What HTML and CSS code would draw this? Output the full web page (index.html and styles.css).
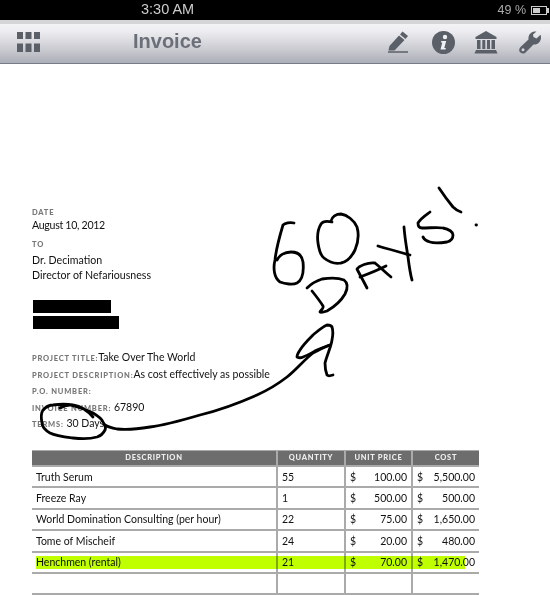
FILE: index.html
```html
<!DOCTYPE html>
<html lang="en">
<head>
  <meta charset="UTF-8">
  <title>Invoice</title>
  <link rel="stylesheet" href="styles.css">
</head>
<body>
  <div class="statusbar">
    <span class="clock">3:30 AM</span>
    <div class="battery-area">
      <span class="percent">49 %</span>
      <div class="battery"><div class="battery-fill"></div></div>
    </div>
  </div>

  <div class="navbar">
    <svg class="icon-grid" width="23" height="20" viewBox="0 0 23 20">
      <path d="M0 0h6v7H0zM8.500 0h6v7h-6zM17 0h6v7h-6zM0 11.500h6V20H0zM8.500 11.500h6V20h-6zM17 11.500h6V20h-6z" fill="#5a5f68"/>
    </svg>
    <h1 class="title">Invoice</h1>
    <div class="nav-icons">
      <svg class="icon-pencil" width="21" height="22" viewBox="0 0 21 22">
        <path d="M14.500 .5l5.500 4.500-2.500 3-5.500-4.500z" fill="#5a5f68"/>
        <path d="M11 4.500l5.500 4.500-10 10.500L.5 19.500 1.500 15z" fill="#5a5f68"/>
        <path d="M0 21h20" stroke="#5a5f68" stroke-width="1.500"/>
      </svg>
      <svg class="icon-info" width="23" height="23" viewBox="0 0 23 23">
        <circle cx="11.500" cy="11.500" r="11.500" fill="#5a5f68"/>
        <circle cx="13" cy="6" r="2.200" fill="#f0f1f4"/>
        <path d="M9.200 10h5l-1.900 7h1.500l-.3 1.500H8.500l1.800-7H9z" fill="#f0f1f4"/>
      </svg>
      <svg class="icon-bank" width="24" height="23" viewBox="0 0 24 23">
        <path d="M12 0L22.500 6V8h-21V6z" fill="#5a5f68"/>
        <path d="M3 9h3.500v9H3zM8.300 9h3v9h-3zM13 9h3v9h-3zM17.500 9H21v9h-3.500z" fill="#5a5f68"/>
        <path d="M2 19h20l1.500 3.500H.5z" fill="#5a5f68"/>
      </svg>
      <svg class="icon-wrench" width="22" height="23" viewBox="0 0 22 23">
        <path d="M15.500.5C11.500 1 9 4.500 9.500 8.500L1.500 16C-.5 18 0 20.500 1.500 21.500 3 23 5.500 23 7 21L14.500 13.500C18.500 14 22 11 22 6.500 22 5.500 21.800 4.500 21.500 3.800L17.500 7.500 14.500 6 14 3.500 17.500.5z" fill="#5a5f68"/>
        <circle cx="4" cy="18.800" r="1.500" fill="#d5d6dc"/>
      </svg>
    </div>
  </div>

  <div class="page">
    <div class="meta">
      <div class="caption">DATE</div>
      <div class="line line-date">August 10, 2012</div>
      <div class="caption caption-to">TO</div>
      <div class="line">Dr. Decimation</div>
      <div class="line line-second">Director of Nefariousness</div>
      <div class="redact redact-short"></div>
      <div class="redact redact-long"></div>
    </div>

    <div class="project">
      <div class="prow"><span class="caption">PROJECT TITLE:</span>Take Over The World</div>
      <div class="prow"><span class="caption">PROJECT DESCRIPTION:</span>As cost effectively as possible</div>
      <div class="prow"><span class="caption">P.O. NUMBER:</span></div>
      <div class="prow"><span class="caption">INVOICE NUMBER:</span> 67890</div>
      <div class="prow"><span class="caption">TERMS:</span> 30 Days</div>
    </div>

    <table class="items">
      <thead>
        <tr><th>DESCRIPTION</th><th>QUANTITY</th><th>UNIT PRICE</th><th>COST</th></tr>
      </thead>
      <tbody>
        <tr><td>Truth Serum</td><td>55</td><td><div class="money"><span>$</span><span>100.00</span></div></td><td><div class="money"><span>$</span><span>5,500.00</span></div></td></tr>
        <tr><td>Freeze Ray</td><td>1</td><td><div class="money"><span>$</span><span>500.00</span></div></td><td><div class="money"><span>$</span><span>500.00</span></div></td></tr>
        <tr><td>World Domination Consulting (per hour)</td><td>22</td><td><div class="money"><span>$</span><span>75.00</span></div></td><td><div class="money"><span>$</span><span>1,650.00</span></div></td></tr>
        <tr><td>Tome of Mischeif</td><td>24</td><td><div class="money"><span>$</span><span>20.00</span></div></td><td><div class="money"><span>$</span><span>480.00</span></div></td></tr>
        <tr><td>Henchmen (rental)</td><td>21</td><td><div class="money"><span>$</span><span>70.00</span></div></td><td><div class="money"><span>$</span><span>1,470.00</span></div></td></tr>
        <tr class="empty"><td></td><td></td><td></td><td></td></tr>
      </tbody>
    </table>

    <div class="highlight"></div>

    <!-- pen scribbles on top of the invoice -->
    <svg class="ink" width="550" height="595" viewBox="0 0 550 595">
      <g fill="none" stroke="#000" stroke-width="2.800" stroke-linecap="round" stroke-linejoin="round">
        <path d="M294 223C290 222 285 223 283 225 280 235 276 250 275 260 273 268 274 278 280 282 285 284 293 285 297 283 302 280 304 272 303 262 302 255 297 252 291 252 284 252 279 256 277 260"/>
        <path d="M332 222C328 221 323 221 321 224 318 229 317 236 318 243 319 250 320 255 324 258 329 262 336 264 341 263 347 262 352 256 355 250 358 243 359 234 357 227 354 220 347 215 341 214 336 214 332 217 331 221"/>
        <path d="M307 288C311 284 316 281 322 279 329 278 339 278 344 280 348 283 348 288 345 294 341 301 334 307 327 311 324 312 321 313 320 312 321 310 324 308 323 306 320 301 316 296 312 291"/>
        <path d="M367 288C364 282 360 275 357 269 359 266 368 262 375 263 380 267 386 273 391 277"/>
        <path d="M360 277C368 274 378 270 386 266"/>
        <path d="M378 246C388 249 399 252 410 255"/>
        <path d="M404 227C405 240 407 250 408 257 409 265 410 273 412 280"/>
        <path d="M430 212C426 215 421 218 418 223 418 226 419 228 422 228 430 228 438 227 443 228 449 229 453 232 453 235 453 239 451 241 447 242 440 243 433 243 430 242 426 241 424 239 423 237"/>
        <path d="M439 188C443 194 448 201 453 207 455 209 458 211 461 212"/>
        <path d="M476 225h.5"/>
        <path d="M333 375C330 376 328 376 327 375 325 370 325 367 325 363 327 355 331 347 332 340 333 335 333 330 332 327 331 325 329 325 327 325 322 327 318 331 313 335 308 340 303 345 300 350 298 353 297 355 297 357 299 358 301 358 303 357 309 355 313 352 317 350 322 348 326 346 330 345"/>
        <path d="M330 345C324 347 319 350 313 353 304 360 296 370 287 377 278 384 268 390 257 395 239 403 220 410 200 415 183 420 166 425 150 427 138 429 127 430 117 429 112 428 108 427 105 425"/>
        <path d="M60 408C63 406 66 405 70 405 78 407 87 410 93 413 98 416 102 419 103 422 105 425 106 428 105 430 103 434 100 436 97 437 90 439 82 439 73 438 65 437 56 436 50 433 45 430 42 427 42 423 41 418 41 413 43 410 46 407 49 405 53 405 60 404 67 404 73 405 80 406 88 411 93 417"/>
      </g>
    </svg>
  </div>
</body>
</html>
```

FILE: styles.css
```css
* {
  box-sizing: border-box;
}

html, body {
  margin: 0;
  padding: 0;
}

body {
  width: 550px;
  height: 595px;
  overflow: hidden;
  background: #fff;
  font-family: Lato, "Liberation Sans", sans-serif;
  color: #111;
}

.statusbar {
  height: 20px;
  background: #000;
  color: #ccc;
  font-family: "Liberation Sans", sans-serif;
  font-size: 14.500px;
  display: flex;
  align-items: center;
  justify-content: flex-end;
  padding-right: 3px;
  position: relative;
}

.clock {
  position: absolute;
  left: 141px;
  top: 1px;
}

.battery-area {
  display: flex;
  align-items: center;
  gap: 5px;
}

.percent {
  font-size: 12.500px;
  color: #aaa;
}

.battery {
  width: 16px;
  height: 9px;
  border: 1px solid #ccc;
  padding: 1px;
  position: relative;
}

.battery::after {
  content: "";
  position: absolute;
  right: -3px;
  top: 1px;
  width: 2px;
  height: 5px;
  background: #ccc;
}

.battery-fill {
  width: 7px;
  height: 5px;
  background: #ccc;
}

.navbar {
  height: 44px;
  background: linear-gradient(#d5d5d8 0, #d5d5d8 4px, #f3f3f6 4px, #eeeef2 25%, #c9cad0 70%, #acaeb8 100%);
  border-bottom: 1px solid #777b86;
  display: flex;
  align-items: center;
  padding: 0 9px 0 17px;
  position: relative;
}

.title {
  margin: 0 0 0 93px;
  font-family: "Liberation Sans", sans-serif;
  font-size: 20px;
  font-weight: bold;
  color: #6b6f78;
}

.nav-icons {
  margin-left: auto;
  display: flex;
  align-items: center;
  padding-top: 1px;
}

.icon-info {
  margin-left: 23px;
}

.icon-bank {
  margin-left: 19px;
}

.icon-wrench {
  margin-left: 21px;
}

.page {
  position: relative;
  height: 531px;
  padding: 0 0 0 32px;
}

.meta {
  padding-top: 144px;
}

.caption {
  font-size: 7.500px;
  font-weight: 900;
  color: #777;
  letter-spacing: .8px;
}

.line {
  font-size: 10.600px;
  line-height: 14px;
  margin-top: 4px;
}

.line-date {
  margin-top: 1px;
  letter-spacing: -.3px;
}

.caption-to {
  margin-top: 8px;
}

.line-second {
  margin-top: 1px;
}

.redact {
  background: #000;
  height: 13px;
  margin-top: 3px;
  margin-left: 1px;
}

.redact-short {
  width: 78px;
  margin-top: 18px;
}

.redact-long {
  width: 86px;
}

.project {
  margin-top: 20px;
}

.prow {
  font-size: 10.500px;
  height: 16.500px;
  line-height: 16.500px;
}

.items {
  margin-top: 18px;
  width: 447px;
  border-collapse: collapse;
  table-layout: fixed;
  font-size: 10.500px;
}

.items th {
  background: #6d6d6d;
  color: #eee;
  font-size: 7.500px;
  font-weight: 900;
  letter-spacing: .7px;
  height: 16px;
  padding: 0;
  border-top: 1px solid #aaa;
  border-bottom: 2px solid #aaa;
}

.items th:nth-child(1), .items td:nth-child(1) { width: 245px; }
.items th:nth-child(2), .items td:nth-child(2) { width: 68px; }
.items th:nth-child(3), .items td:nth-child(3) { width: 67px; }

.items th + th,
.items td + td {
  border-left: 2px solid #aaa;
}

.items td {
  height: 21.400px;
  padding: 0 4px;
  border-bottom: 2px solid #aaa;
}

.money {
  display: flex;
  justify-content: space-between;
}

.highlight {
  position: absolute;
  left: 36px;
  top: 492px;
  width: 429px;
  height: 13px;
  background: #c0ff00;
  mix-blend-mode: multiply;
}

.ink {
  position: absolute;
  left: 0;
  top: -64px;
}
```
